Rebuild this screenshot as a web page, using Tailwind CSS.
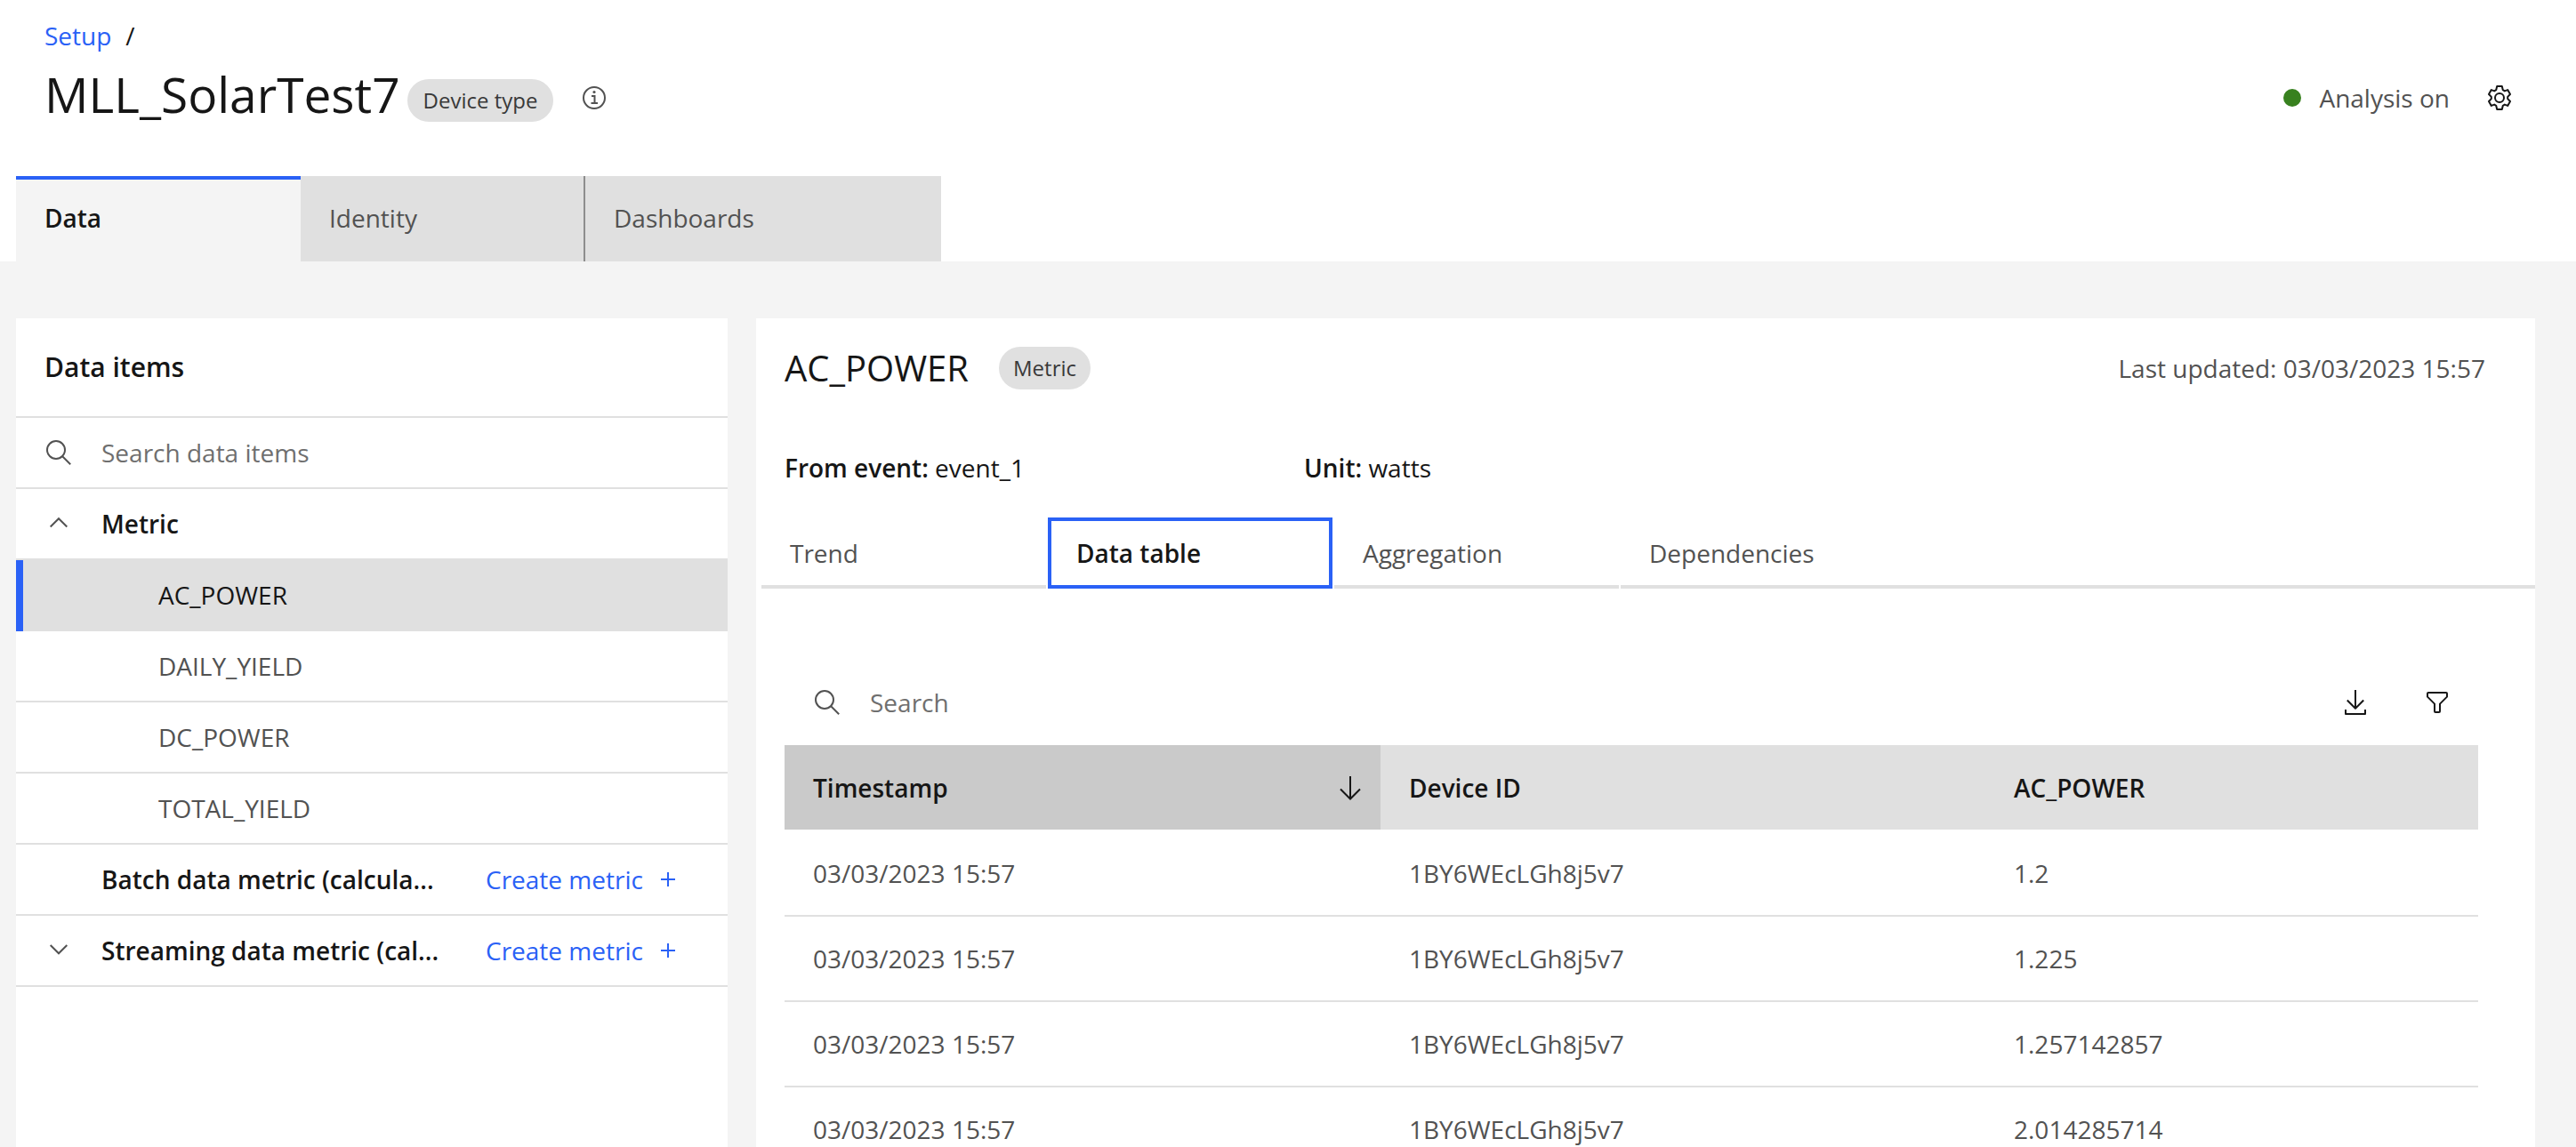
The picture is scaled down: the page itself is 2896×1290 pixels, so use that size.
<!DOCTYPE html>
<html lang="en">
<head>
<meta charset="utf-8">
<title>MLL_SolarTest7</title>
<script src="https://cdn.jsdelivr.net/npm/@tailwindcss/browser@4"></script>
</head>
<body class="flex h-screen flex-col overflow-hidden bg-[#f4f4f4] font-['Open_Sans',sans-serif] text-[28px] leading-10 text-[#161616]">

<header class="bg-white pt-5">
  <nav class="flex gap-4 px-[50px]" aria-label="Breadcrumb">
    <a href="#" class="text-[#2a61f6]">Setup</a>
    <span>/</span>
  </nav>

  <div class="mt-3.5 flex h-[72px] items-center pr-18 pl-[50px]">
    <h1 class="pb-2 text-[55px] leading-[64px]">MLL_SolarTest7</h1>
    <span class="mt-1.5 ml-2 flex h-12 items-center rounded-full bg-[#e0e0e0] px-[18px] text-2xl text-[#393939]">Device type</span>
    <button type="button" aria-label="Information" class="ml-8 size-7">
      <svg viewBox="0 0 28 28" class="size-7" fill="none" stroke="#525252" stroke-width="2">
        <circle cx="14" cy="14" r="12"/>
        <path d="M11 12h3.5v8M10.500 20h7.500"/>
        <circle cx="14" cy="7.500" r="1.600" fill="#525252" stroke="none"/>
      </svg>
    </button>
    <div class="ml-auto flex items-center text-[#525252]">
      <span class="mr-5 size-5 rounded-full bg-[#38811f]"></span>
      <span>Analysis on</span>
    </div>
    <button type="button" aria-label="Settings" class="ml-[42px] size-7">
      <svg viewBox="0 0 28 28" class="size-7" fill="none" stroke="#161616" stroke-width="2" stroke-linejoin="round">
        <path d="M11.200 1h5.600l1 4.200 2 1.200 3.400-1.300 2.800 4.900-2.800 2.900v2.200l2.800 2.900-2.800 4.900-3.400-1.300-2 1.200-1 4.200h-5.600l-1-4.200-2-1.200-3.400 1.300L2 18l2.800-2.900v-2.200L2 10l2.800-4.900 3.400 1.300 2-1.200z"/>
        <circle cx="14" cy="14" r="5"/>
      </svg>
    </button>
  </div>

  <div role="tablist" class="mt-[52px] ml-[18px] flex h-24 text-[#525252]">
    <button role="tab" aria-selected="true" class="w-80 border-t-4 border-[#2a61f6] bg-[#f4f4f4] px-8 pb-1.5 text-left font-semibold text-[#161616]">Data</button>
    <button role="tab" class="w-80 border-r-2 border-[#8d8d8d] bg-[#e0e0e0] px-8 pb-0.5 text-left">Identity</button>
    <button role="tab" class="w-[400px] bg-[#e0e0e0] px-8 pb-0.5 text-left">Dashboards</button>
  </div>
</header>

<main class="flex min-h-0 flex-1 gap-8 pt-16 pr-[46px] pl-[18px]">
  <aside class="w-[800px] shrink-0 bg-white">
    <h2 class="flex h-28 items-center border-b-2 border-[#e0e0e0] px-8 text-[30px] font-semibold">Data items</h2>
    <label class="flex h-20 items-center gap-8 border-b-2 border-[#e0e0e0] px-8">
      <svg viewBox="0 0 32 32" class="size-8 shrink-0" fill="none" stroke="#525252" stroke-width="2"><circle cx="13" cy="13" r="10"/><path d="M20.200 20.200l9 9"/></svg>
      <input type="text" aria-label="Search data items" placeholder="Search data items" class="min-w-0 flex-1 outline-none placeholder:text-[#6f6f6f]">
    </label>
    <ul>
      <li>
        <button type="button" aria-expanded="true" class="flex h-20 w-full items-center gap-8 border-b-2 border-[#e0e0e0] px-8 text-left font-semibold">
          <svg viewBox="0 0 32 32" class="size-8" fill="none" stroke="#525252" stroke-width="2"><path d="M6.700 19.500L16 10.200l9.300 9.300"/></svg>
          Metric
        </button>
        <ul class="text-[#525252]">
          <li><a href="#" aria-current="true" class="flex h-20 items-center border-l-8 border-[#2a61f6] bg-[#e0e0e0] pb-0.5 pl-38 text-[#161616]">AC_POWER</a></li>
          <li><a href="#" class="flex h-20 items-center border-b-2 border-[#e0e0e0] pl-40">DAILY_YIELD</a></li>
          <li><a href="#" class="flex h-20 items-center border-b-2 border-[#e0e0e0] pl-40">DC_POWER</a></li>
          <li><a href="#" class="flex h-20 items-center border-b-2 border-[#e0e0e0] pl-40">TOTAL_YIELD</a></li>
        </ul>
      </li>
      <li class="flex h-20 items-center gap-8 border-b-2 border-[#e0e0e0] px-8">
        <span class="size-8"></span>
        <span class="w-[400px] font-semibold whitespace-nowrap">Batch data metric (calcula...</span>
        <button type="button" class="flex items-center gap-5 whitespace-nowrap text-[#2a61f6]">Create metric
          <svg viewBox="0 0 16 16" class="size-4" stroke="currentColor" stroke-width="2"><path d="M8 0v16M0 8h16"/></svg>
        </button>
      </li>
      <li class="flex h-20 items-center gap-8 border-b-2 border-[#e0e0e0] px-8">
        <button type="button" aria-label="Expand" class="size-8">
          <svg viewBox="0 0 32 32" class="size-8" fill="none" stroke="#525252" stroke-width="2"><path d="M6.700 10l9.300 9.300 9.300-9.300"/></svg>
        </button>
        <span class="w-[400px] font-semibold whitespace-nowrap">Streaming data metric (cal...</span>
        <button type="button" class="flex items-center gap-5 whitespace-nowrap text-[#2a61f6]">Create metric
          <svg viewBox="0 0 16 16" class="size-4" stroke="currentColor" stroke-width="2"><path d="M8 0v16M0 8h16"/></svg>
        </button>
      </li>
    </ul>
  </aside>

  <section class="min-w-0 flex-1 overflow-hidden bg-white">
    <div class="flex h-28 items-center pr-14 pl-8">
      <h2 class="text-[40px] leading-[48px]">AC_POWER</h2>
      <span class="ml-[34px] flex h-12 items-center rounded-full bg-[#e0e0e0] px-4 text-2xl text-[#393939]">Metric</span>
      <p class="ml-auto text-[#525252]">Last updated: 03/03/2023 15:57</p>
    </div>
    <div class="flex h-28 items-center px-8">
      <p class="w-[584px]"><strong class="font-semibold">From event:</strong> event_1</p>
      <p><strong class="font-semibold">Unit:</strong> watts</p>
    </div>

    <div role="tablist" class="ml-1.5 flex h-20 gap-0.5 text-[#525252]">
      <button role="tab" class="w-80 border-y-4 border-t-transparent border-b-[#e0e0e0] px-8 text-left">Trend</button>
      <button role="tab" aria-selected="true" class="w-80 border-4 border-[#2a61f6] px-7 text-left font-semibold text-[#161616]">Data table</button>
      <button role="tab" class="w-80 border-y-4 border-t-transparent border-b-[#e0e0e0] px-8 text-left">Aggregation</button>
      <button role="tab" class="flex-1 border-y-4 border-t-transparent border-b-[#e0e0e0] px-8 text-left">Dependencies</button>
    </div>

    <div class="mt-20 mr-16 ml-8">
      <div class="flex h-24 items-center">
        <label class="flex min-w-0 flex-1 items-center gap-8 pl-8">
          <svg viewBox="0 0 32 32" class="size-8 shrink-0" fill="none" stroke="#525252" stroke-width="2"><circle cx="13" cy="13" r="10"/><path d="M20.200 20.200l9 9"/></svg>
          <input type="text" aria-label="Search" placeholder="Search" class="min-w-0 flex-1 outline-none placeholder:text-[#6f6f6f]">
        </label>
        <button type="button" aria-label="Download" class="flex h-24 w-[92px] items-center justify-center">
          <svg viewBox="0 0 32 32" class="size-8" fill="none" stroke="#161616" stroke-width="2"><path d="M16 2v20.500M6.800 13.500l9.200 9.200 9.200-9.200M5 24v5h22v-5" stroke-linejoin="round"/></svg>
        </button>
        <button type="button" aria-label="Filter" class="flex h-24 w-[92px] items-center justify-center">
          <svg viewBox="0 0 32 32" class="size-8" fill="none" stroke="#161616" stroke-width="2" stroke-linejoin="round"><path d="M6 5h20a1 1 0 0 1 1 1v3.600l-8 8V26a1 1 0 0 1-1 1h-4a1 1 0 0 1-1-1v-8.400l-8-8V6a1 1 0 0 1 1-1z"/></svg>
        </button>
      </div>

      <table class="w-full table-fixed text-left text-[#525252]">
        <colgroup><col class="w-[670px]"><col class="w-[680px]"><col></colgroup>
        <thead class="text-[#161616]">
          <tr class="h-24 border-b-2 border-white">
            <th scope="col" aria-sort="descending" class="bg-[#cacaca] pr-[18px] pl-8 font-semibold">
              <button type="button" class="flex w-full items-center justify-between">Timestamp
                <svg viewBox="0 0 32 32" class="size-8" fill="none" stroke="#161616" stroke-width="2"><path d="M16 3v25M5 17.500l11 11 11-11"/></svg>
              </button>
            </th>
            <th scope="col" class="bg-[#e0e0e0] px-8 font-semibold">Device ID</th>
            <th scope="col" class="bg-[#e0e0e0] px-8 font-semibold">AC_POWER</th>
          </tr>
        </thead>
        <tbody>
          <tr class="h-24 border-b-2 border-[#e0e0e0]"><td class="px-8">03/03/2023 15:57</td><td class="px-8">1BY6WEcLGh8j5v7</td><td class="px-8">1.2</td></tr>
          <tr class="h-24 border-b-2 border-[#e0e0e0]"><td class="px-8">03/03/2023 15:57</td><td class="px-8">1BY6WEcLGh8j5v7</td><td class="px-8">1.225</td></tr>
          <tr class="h-24 border-b-2 border-[#e0e0e0]"><td class="px-8">03/03/2023 15:57</td><td class="px-8">1BY6WEcLGh8j5v7</td><td class="px-8">1.257142857</td></tr>
          <tr class="h-24 border-b-2 border-[#e0e0e0]"><td class="px-8">03/03/2023 15:57</td><td class="px-8">1BY6WEcLGh8j5v7</td><td class="px-8">2.014285714</td></tr>
        </tbody>
      </table>
    </div>
  </section>
</main>
</body>
</html>
